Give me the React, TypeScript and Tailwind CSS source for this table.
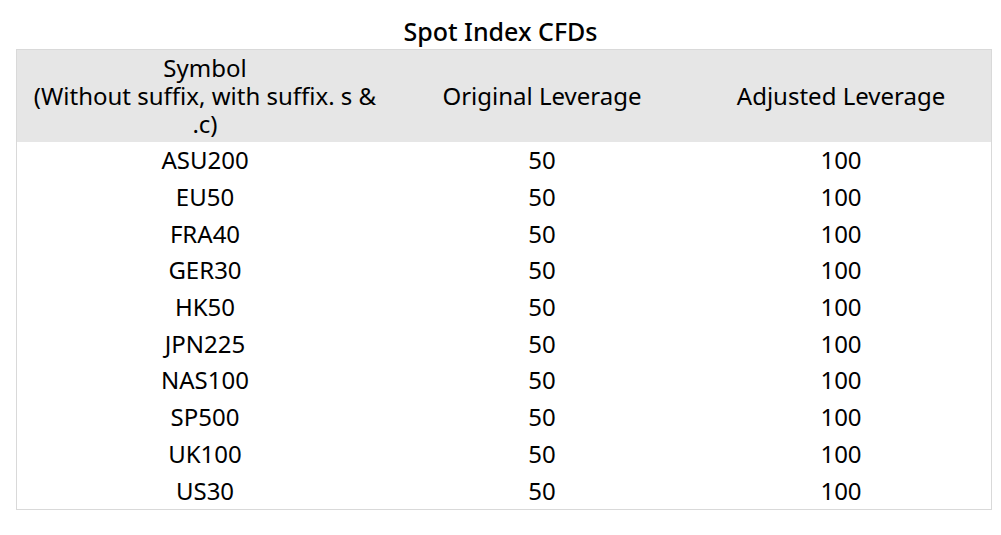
const rows = ["ASU200", "EU50", "FRA40", "GER30", "HK50", "JPN225", "NAS100", "SP500", "UK100", "US30"];

export default function App() {
  return (
    <div className="w-[1001px] h-[535px] bg-white text-black font-['Noto_Sans',sans-serif]">
      <h1 className="pt-[15px] h-[49px] text-center text-[25px] leading-[32px] font-medium">Spot Index CFDs</h1>
      <div className="ml-[16px] w-[976px] border border-[#d9d9d9] text-[24px]">
        <div className="grid grid-cols-[376px_298px_1fr] h-[92px] bg-[#e6e6e6] items-center text-center leading-[28px]">
          <div className="px-[14px]">Symbol<br />(Without suffix, with suffix. s &amp; .c)</div>
          <div>Original Leverage</div>
          <div>Adjusted Leverage</div>
        </div>
        {rows.map((r) => (
          <div key={r} className="grid grid-cols-[376px_298px_1fr] h-[36.7px] items-center text-center leading-[28px]">
            <div>{r}</div>
            <div>50</div>
            <div>100</div>
          </div>
        ))}
      </div>
    </div>
  );
}
